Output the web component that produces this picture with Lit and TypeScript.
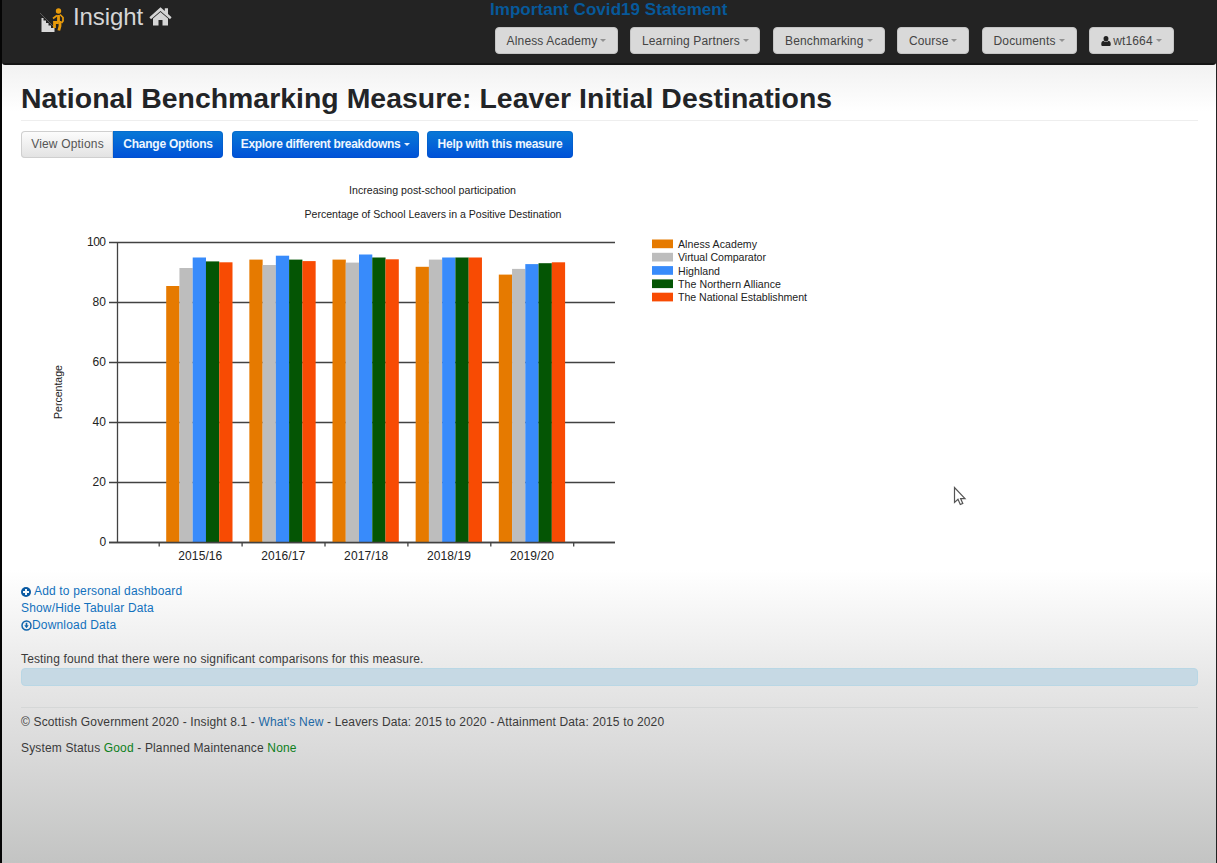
import { LitElement, html, svg, css } from "lit";
import { customElement, property } from "lit/decorators.js";

interface Series {
  name: string;
  color: string;
  values: number[];
}

const YEARS = ["2015/16", "2016/17", "2017/18", "2018/19", "2019/20"];

const SERIES: Series[] = [
  { name: "Alness Academy", color: "#e67a00", values: [85.5, 94.3, 94.3, 91.9, 89.3] },
  { name: "Virtual Comparator", color: "#bdbdbd", values: [91.5, 92.5, 93.3, 94.3, 91.2] },
  { name: "Highland", color: "#388bfb", values: [95, 95.6, 96, 95, 92.8] },
  { name: "The Northern Alliance", color: "#045504", values: [93.7, 94.3, 95, 95, 93.1] },
  { name: "The National Establishment", color: "#f84b03", values: [93.4, 93.8, 94.4, 95, 93.4] },
];

const LEGEND_WIDTHS = [79, 88, 42, 103, 129];

@customElement("nav-button")
class NavButton extends LitElement {
  @property() label = "";
  @property({ type: Boolean }) user = false;

  static styles = css`
    :host { display: block; }
    .btn {
      box-sizing: border-box;
      width: 100%;
      height: 27px;
      display: flex;
      align-items: center;
      justify-content: center;
      gap: 3px;
      padding: 0;
      border: 1px solid #c4c4c4;
      border-radius: 4px;
      background: #d9d9d9;
      color: #444;
      font: 12px "Liberation Sans", Arial, sans-serif;
      letter-spacing: 0.15px;
      white-space: nowrap;
    }
    .person { margin-right: -1px; flex: none; }
    .caret {
      border: 3.5px solid transparent;
      border-top-color: #929292;
      border-bottom: 0;
    }
  `;

  render() {
    return html`<button class="btn">
      ${this.user
        ? html`<svg class="person" width="10" height="10" viewBox="0 0 11 11">
            <path fill="#222" d="M5.5 0C7.300 0 8.200 1.300 8.200 2.900S7.200 6 5.500 6 2.800 4.500 2.800 2.900 3.700 0 5.500 0zM2.700 5.300C3.500 6.200 4.400 6.700 5.500 6.700S7.500 6.200 8.300 5.300C10.200 5.600 10.700 7.300 10.700 9.300 10.700 10.400 10 11 9.100 11H1.900C1 11 .3 10.400 .3 9.300 .3 7.300 .8 5.600 2.700 5.300z"/>
          </svg>`
        : ""}
      <span>${this.label}</span><span class="caret"></span>
    </button>`;
  }
}

@customElement("measure-chart")
class MeasureChart extends LitElement {
  static styles = css`
    :host { display: block; }
    .chart { display: block; font-family: "Liberation Sans", Arial, sans-serif; fill: #222; }
    .small { font-size: 10.6px; }
    .axis { font-size: 12px; }
    .line { stroke: #424242; stroke-width: 1.3; }
  `;

  render() {
    const base = 542.5;
    return html`<svg class="chart" width="820" height="400" viewBox="21 170 820 400">
      <text class="small" x="349" y="193.500" textLength="167">Increasing post-school participation</text>
      <text class="small" x="304.500" y="218" textLength="257">Percentage of School Leavers in a Positive Destination</text>
      <text class="small" transform="translate(62 419) rotate(-90)" textLength="54">Percentage</text>
      ${[0, 20, 40, 60, 80, 100].map((v) => {
        const y = base - v * 3;
        const w = v === 100 ? 19 : v === 0 ? 6.5 : 13.5;
        return svg`
          <line class="line" x1="109" x2="615" y1=${y} y2=${y}></line>
          <text class="axis" x=${106 - w} y=${y + 3.5} textLength=${w}>${v}</text>`;
      })}
      ${SERIES.map((s, i) =>
        s.values.map((v, g) => {
          const x = 166.2 + g * 83.15 + i * 13.25;
          return svg`<rect x=${x} y=${base - v * 3} width="13.300" height=${v * 3 - 0.3} fill=${s.color}></rect>`;
        })
      )}
      <line class="line" x1="117.500" x2="117.500" y1="242" y2="543"></line>
      <line class="line" x1="109" x2="615" y1=${base} y2=${base}></line>
      ${[0, 1, 2, 3, 4, 5].map((i) => {
        const x = 159.2 + i * 82.9;
        return svg`<line class="line" x1=${x} x2=${x} y1="542.500" y2="546.500"></line>`;
      })}
      ${YEARS.map((t, i) => svg`<text class="axis" x=${178.3 + i * 82.9} y="560" textLength="44">${t}</text>`)}
      ${SERIES.map((s, i) => svg`
        <rect x="652" y=${239.5 + i * 13.3} width="21" height="8.700" fill=${s.color}></rect>
        <text class="small" x="678" y=${248 + i * 13.3} textLength=${LEGEND_WIDTHS[i]}>${s.name}</text>`)}
    </svg>`;
  }
}

@customElement("app-root")
class AppRoot extends LitElement {
  static styles = css`
    :host {
      display: block;
      height: 863px;
      overflow: hidden;
      font: 12px/17px "Liberation Sans", Arial, sans-serif;
      color: #3a3a3a;
    }
    .page {
      box-sizing: border-box;
      height: 863px;
      border-left: 2px solid #050505;
      border-right: 1px solid #222;
      background: linear-gradient(#f2f2f2 66px, #ffffff 112px, #ffffff 570px, #f1f1f1 635px, #e5e5e5 690px, #d9d9d9 755px, #c3c4c3 863px);
    }
    .top {
      box-sizing: border-box;
      height: 65px;
      display: flex;
      justify-content: space-between;
      padding: 0 42px 0 38px;
      background: #232323;
      border-bottom: 2px solid #151515;
      border-radius: 0 0 3px 3px;
    }
    .brand { display: flex; align-items: flex-start; color: #d5d5d5; }
    .logo { margin-top: 7px; }
    .word { font-size: 24px; line-height: 34px; margin-left: 8px; letter-spacing: -0.1px; }
    .home { margin: 7px 0 0 6px; }
    .right { width: 684px; display: flex; flex-direction: column; }
    .covid { height: 27px; font-size: 17px; line-height: 20px; font-weight: bold; color: #07599a; letter-spacing: 0.05px; white-space: nowrap; }
    .nav {
      display: grid;
      grid-template-columns: 123px 130px 112px 72px 95px 85px;
      justify-content: space-between;
      padding: 0 0 0 5px;
    }
    .main { padding: 0 18px 0 19px; }
    .title {
      margin: 0;
      height: 56px;
      box-sizing: border-box;
      padding-top: 16px;
      font-size: 28.4px;
      line-height: 34px;
      letter-spacing: 0.03px;
      color: #222427;
      border-bottom: 1px solid #eeeeee;
      white-space: nowrap;
    }
    .tools { display: flex; height: 27px; padding-top: 10px; margin-bottom: 12px; }
    .tool {
      box-sizing: border-box;
      height: 27px;
      padding: 0 0 1px;
      border: 0;
      border-radius: 4px;
      font: bold 12px "Liberation Sans", Arial, sans-serif;
      color: #eef6ff;
      background: linear-gradient(#0879d6, #0051d8);
      box-shadow: inset 0 0 0 1px rgba(0, 75, 180, 0.25);
      white-space: nowrap;
      display: flex;
      align-items: center;
      justify-content: center;
      gap: 4px;
    }
    .view {
      width: 92px;
      padding-left: 1px;
      color: #555;
      font-weight: normal;
      letter-spacing: 0.18px;
      background: linear-gradient(#fdfdfd, #e2e2e2);
      box-shadow: inset 0 0 0 1px #cfcfcf;
      border-radius: 4px 0 0 4px;
    }
    .change { width: 110px; border-radius: 0 4px 4px 0; margin-right: 9px; letter-spacing: -0.22px; }
    .explore { width: 187px; margin-right: 8px; letter-spacing: -0.33px; }
    .help { width: 146px; letter-spacing: -0.27px; }
    .caret { border: 3.5px solid transparent; border-top-color: #e4f0ff; border-bottom: 0; }
    .links { display: flex; flex-direction: column; padding-top: 13px; align-items: flex-start; }
    .link { color: #1271bd; display: flex; align-items: center; letter-spacing: 0.17px; white-space: nowrap; }
    .gap { margin-right: 3px; }
    .note { margin-top: 17px; letter-spacing: 0.14px; }
    .bar {
      box-sizing: border-box;
      height: 18px;
      border: 1px solid #b9d7e5;
      border-radius: 4px;
      background: #c6d9e4;
    }
    .foot { margin-top: 21px; border-top: 1px solid #d5d7d7; padding-top: 6px; letter-spacing: 0.15px; }
    .row { height: 26px; white-space: nowrap; }
    .new { color: #1c68a5; }
    .good { color: #0d7f1c; }
    .pointer { position: absolute; left: 953px; top: 486px; }
  `;

  render() {
    return html`<div class="page">
      <header class="top">
        <div class="brand">
          <svg class="logo" width="25" height="26" viewBox="0 0 25 26">
            <path fill="#d9d9d9" d="M1.500 11H3.500V13.500H6V16H8.500V18.500H11V21H14.500V25H1.500z"/>
            <path d="M0 6L14 20" stroke="#666" stroke-width=".8"/>
            <circle cx="18.500" cy="4" r="2.700" fill="#e89b0b"/>
            <path d="M18.500 8V15M18.500 15.500H14.500V21M20 14V19L18.800 23.500" fill="none" stroke="#e89b0b" stroke-width="2.800"/>
            <path d="M17 8.500L13 11.500M20 7.500L23 10.500V14L21.500 16" fill="none" stroke="#e89b0b" stroke-width="1.700"/>
          </svg>
          <span class="word">Insight</span>
          <svg class="home" width="23" height="20" viewBox="0 0 23 20">
            <path fill="#d5d5d5" d="M11.500 .3L15.800 4V1.300H19V7L22.600 10.200 21 12.200 11.500 4 2 12.200 .4 10.200zM11.500 5L19 11.500V18.500H13.500V13H9.500V18.500H4V11.500z"/>
          </svg>
        </div>
        <div class="right">
          <div class="covid">Important Covid19 Statement</div>
          <nav class="nav">
            <nav-button label="Alness Academy"></nav-button>
            <nav-button label="Learning Partners"></nav-button>
            <nav-button label="Benchmarking"></nav-button>
            <nav-button label="Course"></nav-button>
            <nav-button label="Documents"></nav-button>
            <nav-button label="wt1664" user></nav-button>
          </nav>
        </div>
      </header>
      <main class="main">
        <h1 class="title">National Benchmarking Measure: Leaver Initial Destinations</h1>
        <div class="tools">
          <button class="tool view">View Options</button>
          <button class="tool change">Change Options</button>
          <button class="tool explore">Explore different breakdowns <span class="caret"></span></button>
          <button class="tool help">Help with this measure</button>
        </div>
        <measure-chart></measure-chart>
        <div class="links">
          <a class="link"><svg class="gap" width="10" height="10" viewBox="0 0 10 10"><circle cx="5" cy="5" r="5" fill="#0a5aa3"/><path d="M5 2V8M2 5H8" stroke="#f4f8fb" stroke-width="2"/></svg>Add to personal dashboard</a>
          <a class="link">Show/Hide Tabular Data</a>
          <a class="link"><svg width="11" height="11" viewBox="0 0 11 11"><circle cx="5.500" cy="5.500" r="4.500" fill="none" stroke="#0f65ad" stroke-width="1.500"/><path d="M4.700 2.800H6.300V5.300H7.700L5.500 8.200 3.300 5.300H4.700z" fill="#0f65ad"/></svg>Download Data</a>
        </div>
        <div class="note">Testing found that there were no significant comparisons for this measure.</div>
        <div class="bar"></div>
        <footer class="foot">
          <div class="row">© Scottish Government 2020 - Insight 8.1 - <a class="new">What's New</a> - Leavers Data: 2015 to 2020 - Attainment Data: 2015 to 2020</div>
          <div class="row">System Status <span class="good">Good</span> - Planned Maintenance <span class="good">None</span></div>
        </footer>
      </main>
      <svg class="pointer" width="14" height="21" viewBox="0 0 14 21">
        <path d="M1.500 1.500V16.500L5 13.300 7.300 18.500 9.800 17.400 7.600 12.600H12z" fill="#fff" stroke="#555" stroke-width="1.200"/>
      </svg>
    </div>`;
  }
}
